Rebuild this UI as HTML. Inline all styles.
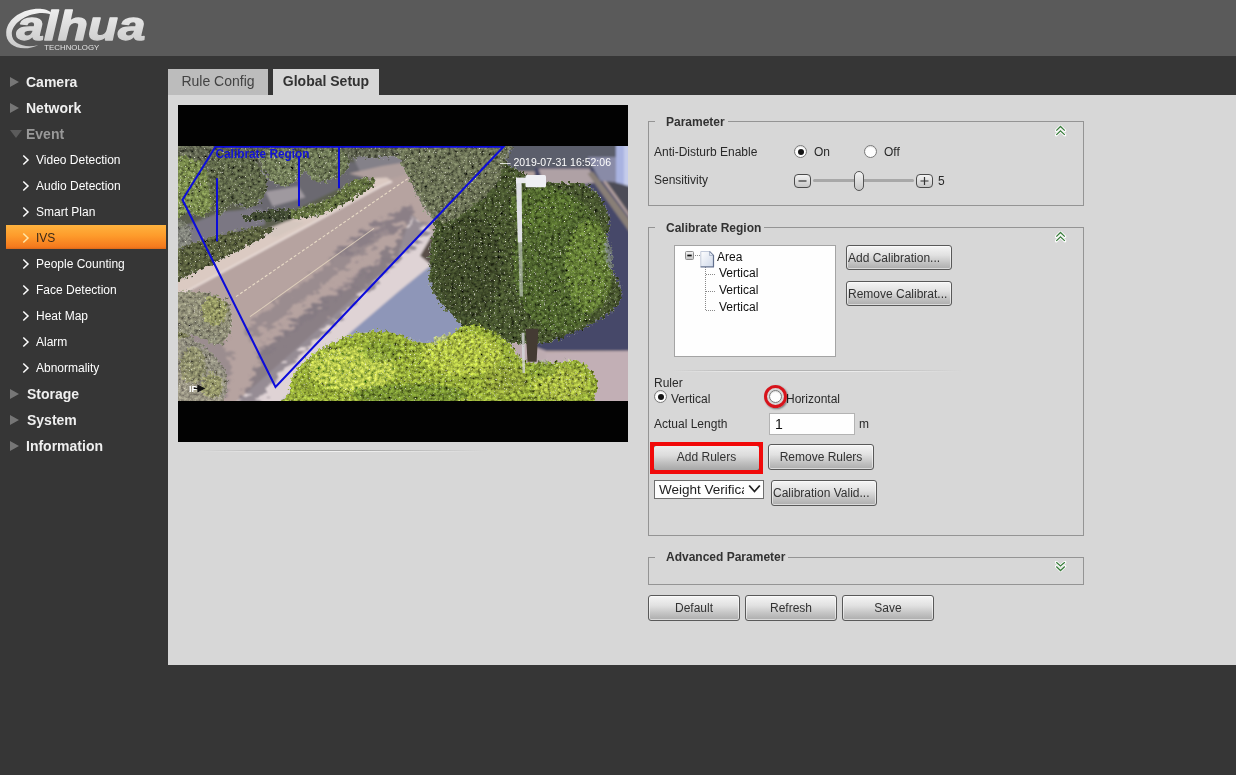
<!DOCTYPE html>
<html lang="en">
<head>
<meta charset="utf-8">
<title>IVS - Global Setup</title>
<style>
*{box-sizing:border-box;margin:0;padding:0}
html,body{width:1236px;height:775px;overflow:hidden}
body{background:#363636;font-family:"Liberation Sans",Arial,sans-serif;font-size:12px;color:#222;position:relative}
.abs{position:absolute}
#root{position:absolute;left:0;top:0;width:1236px;height:775px;will-change:transform;opacity:.999}
#header{left:0;top:0;width:1236px;height:56px;background:#5b5b5b}
#logo{left:0;top:0;width:160px;height:56px}
/* sidebar */
.m1{position:absolute;left:26px;height:26px;line-height:26px;font-size:14px;font-weight:bold;color:#f0f0f0;white-space:nowrap}
.m1.dim{color:#9a9a9a}
.m2{position:absolute;left:36px;height:26px;line-height:26px;font-size:12px;color:#fff;white-space:nowrap}
.tri{position:absolute;left:10px;width:0;height:0;border-left:9px solid #777;border-top:5px solid transparent;border-bottom:5px solid transparent}
.trid{position:absolute;left:10px;width:0;height:0;border-top:8px solid #5c5c5c;border-left:6px solid transparent;border-right:6px solid transparent}
.chev{position:absolute;left:22px;width:8px;height:12px}
#sel{left:6px;top:225px;width:160px;height:24px;background:linear-gradient(#ffb440,#ff9c2c 45%,#f57a1e 92%,#d9691a)}
/* tabs */
.tab{position:absolute;top:69px;height:26px;line-height:24px;font-size:14px;text-align:center;color:#444;white-space:nowrap}
#tab1{left:168px;width:100px;background:#bdbdbd}
#tab2{left:273px;width:106px;background:#d8d8d8;font-weight:bold;font-size:14px;color:#333}
#panel{left:168px;top:95px;width:1068px;height:570px;background:#d8d8d8}
#video{left:178px;top:105px;width:450px;height:337px;background:#030303}
#scene{left:0;top:41px;width:450px;height:255px}
/* fieldsets */
.fs{position:absolute;border:1px solid #959595}
.lg{position:absolute;background:#d8d8d8;font-weight:bold;font-size:12px;color:#333;padding:0 3px 0 11px;height:14px;line-height:14px;white-space:nowrap}
.t{position:absolute;font-size:12px;color:#2a2a2a;white-space:nowrap;line-height:14px;height:14px}
.btn{position:absolute;height:25px;border:1px solid #5a5a5a;border-radius:3px;background:linear-gradient(#f6f6f6,#e2e2e2 40%,#c2c2c2 75%,#aeaeae);font-size:12px;color:#333;line-height:23px;text-align:center;white-space:nowrap;overflow:hidden;box-shadow:inset 0 0 0 1px rgba(255,255,255,.55)}
.radio{position:absolute;width:13px;height:13px;border-radius:50%;border:1px solid #7a7a7a;background:#fff;box-shadow:inset 0 1px 1px rgba(0,0,0,.12)}
.radio.on:after{content:"";position:absolute;left:2.500px;top:2.500px;width:6px;height:6px;border-radius:50%;background:#151515}
.chv{position:absolute;width:12px;height:12px}
</style>
</head>
<body>
<div id="root">
<div id="header" class="abs"></div>
<svg id="logo" class="abs" viewBox="0 0 160 56">
  <defs><linearGradient id="lgr" x1="0" y1="0" x2="0" y2="1"><stop offset="0" stop-color="#f4f4f4"/><stop offset="1" stop-color="#c9c9c9"/></linearGradient></defs>
  <path d="M38.500 45 C22 53 5 46 6.200 32 C7.500 17 26 7.500 42 9 C48 9.600 52 12 53 16 C50 13.500 44 12.500 37 13.500 C23 15.500 11.800 25 11.800 34 C12 44 25 48.500 38.500 45 Z" fill="url(#lgr)"/>
  <text x="16.500" y="39.800" font-family="Liberation Sans, Arial, sans-serif" font-weight="bold" font-style="italic" font-size="40" fill="url(#lgr)" stroke="url(#lgr)" stroke-width="1.300" stroke-linejoin="round" textLength="129" lengthAdjust="spacingAndGlyphs">alhua</text>
  <text x="44.300" y="49.800" font-family="Liberation Sans, Arial, sans-serif" font-size="8" fill="#e2e2e2" textLength="55" lengthAdjust="spacingAndGlyphs">TECHNOLOGY</text>
</svg>

<!-- sidebar -->
<div id="sel" class="abs"></div>
<div class="tri" style="top:77px"></div><div class="m1" style="top:69px">Camera</div>
<div class="tri" style="top:103px"></div><div class="m1" style="top:95px">Network</div>
<div class="trid" style="top:130px"></div><div class="m1 dim" style="top:121px">Event</div>
<div class="m2" style="top:147px">Video Detection</div>
<div class="m2" style="top:173px">Audio Detection</div>
<div class="m2" style="top:199px">Smart Plan</div>
<div class="m2" style="top:225px;color:#3a2a1a">IVS</div>
<div class="m2" style="top:251px">People Counting</div>
<div class="m2" style="top:277px">Face Detection</div>
<div class="m2" style="top:303px">Heat Map</div>
<div class="m2" style="top:329px">Alarm</div>
<div class="m2" style="top:355px">Abnormality</div>
<div class="tri" style="top:389px"></div><div class="m1" style="top:381px;left:27px">Storage</div>
<div class="tri" style="top:415px"></div><div class="m1" style="top:407px;left:27px">System</div>
<div class="tri" style="top:441px"></div><div class="m1" style="top:433px">Information</div>
<svg class="abs" style="left:0;top:140px;width:40px;height:240px" viewBox="0 140 40 240" fill="none" stroke="#fff" stroke-width="1.500">
  <path d="M23.300 155.5 l4.700 4.500 l-4.700 4.500"/><path d="M23.300 181.5 l4.700 4.500 l-4.700 4.500"/><path d="M23.300 207.5 l4.700 4.500 l-4.700 4.500"/>
  <path d="M23.300 233.5 l4.700 4.500 l-4.700 4.500" stroke="#ffe7a8"/><path d="M23.300 259.5 l4.700 4.500 l-4.700 4.500"/><path d="M23.300 285.5 l4.700 4.500 l-4.700 4.500"/>
  <path d="M23.300 311.5 l4.700 4.500 l-4.700 4.500"/><path d="M23.300 337.5 l4.700 4.500 l-4.700 4.500"/><path d="M23.300 363.5 l4.700 4.500 l-4.700 4.500"/>
</svg>

<!-- tabs + panel -->
<div id="tab1" class="tab">Rule Config</div>
<div id="tab2" class="tab">Global Setup</div>
<div id="panel" class="abs"></div>

<!-- video -->
<div id="video" class="abs">
<svg id="scene" class="abs" viewBox="0 0 450 254" preserveAspectRatio="none">
  <rect width="450" height="254" fill="#8a8380"/>
  <!--SCENE-START-->
  <defs>
    <filter id="gb" x="-5%" y="-5%" width="110%" height="110%"><feGaussianBlur stdDeviation="1.200"/></filter>
    <filter id="sh" x="-10%" y="-10%" width="120%" height="120%">
      <feTurbulence type="fractalNoise" baseFrequency="0.090 0.200" numOctaves="3" seed="11" result="n"/>
      <feDisplacementMap in="SourceGraphic" in2="n" scale="22" xChannelSelector="R" yChannelSelector="G" result="d"/>
      <feGaussianBlur in="d" stdDeviation="0.900"/>
    </filter>
    <filter id="leaf" x="-10%" y="-10%" width="120%" height="120%">
      <feTurbulence type="fractalNoise" baseFrequency="0.300" numOctaves="3" seed="5" result="n"/>
      <feColorMatrix in="n" type="matrix" values="1.400 0 0 0 -0.180  1.400 0 0 0 -0.180  1.400 0 0 0 -0.180  0 0 0 0 1" result="g"/>
      <feDisplacementMap in="SourceGraphic" in2="n" scale="9" xChannelSelector="R" yChannelSelector="G" result="d0"/>
      <feGaussianBlur in="d0" stdDeviation="0.700" result="d"/>
      <feBlend in="g" in2="d" mode="overlay" result="bl"/>
      <feComposite in="bl" in2="d" operator="in" result="blm"/>
      <feTurbulence type="fractalNoise" baseFrequency="0.800" numOctaves="1" seed="9" result="n2"/>
      <feColorMatrix in="n2" type="matrix" values="0 0 0 0 0.960  0 0 0 0 0.960  0 0 0 0 0.820  5 0 0 0 -3.300" result="sp"/>
      <feComposite in="sp" in2="d" operator="in" result="spm"/>
      <feMerge><feMergeNode in="blm"/><feMergeNode in="spm"/></feMerge>
    </filter>
    <clipPath id="cs"><rect width="450" height="254"/></clipPath>
  </defs>
  <g clip-path="url(#cs)">
  <g filter="url(#gb)">
    <rect x="-5" y="-5" width="460" height="264" fill="#b7a4a1"/>
    <path d="M-3.6 -3.6 L240.3 -3.6 L233.0 22.6 L209.3 32.8 L196.6 33.5 L94.7 85.6 L-3.6 138.3 Z" fill="#5d6150"/>
    <path d="M72.8 25.5 L152.9 14.6 L203.9 18.2 L189.3 29.1 L120.1 61.9 L83.7 72.8 L58.3 58.3 Z" fill="#6c6a72"/>
    <path d="M-3.6 83.7 L43.7 65.5 L83.7 61.9 L87.4 78.3 L43.7 89.2 L-3.6 109.2 Z" fill="#7c7884"/>
    <path d="M87.4 45.5 L120.1 40.0 L127.4 51.0 L94.7 60.1 Z" fill="#a09aa0"/>
    <path d="M174.8 10.9 L233.0 5.5 L236.7 16.4 L203.9 21.1 L182.0 25.5 Z" fill="#85828a"/>
    <path d="M171.1 27.3 L203.9 20.0 L236.7 14.6 L240.3 25.5 L209.3 33.5 L189.3 32.0 Z" fill="#b0a09e"/>
    <path d="M-3.6 135.4 L92.8 83.0 L145.6 58.3 L196.6 32.0 L209.0 31.3 L214.1 35.3 L203.9 40.0 L105.6 93.2 L-3.6 152.2 Z" fill="#dccbc3"/>
    <path d="M-3.6 151.5 L105.6 92.5 L203.9 39.7 L214.1 35.3" fill="none" stroke="#efe3df" stroke-width="1.600"/>
    <path d="M78.3 87.4 L109.2 74.6 L127.4 76.5 L98.3 91.0 Z" fill="#d6c8c0"/>
    <path d="M54.6 258.5 L103.8 258.5 L182.0 180.2 L225.7 143.8 L254.9 120.1 L254.9 85.6 L233.0 69.2 L218.4 112.9 L152.9 171.1 Z" fill="#e0d4d6"/>
    <path d="M100.1 258.5 L174.8 183.9 L222.1 143.8 L254.9 117.2 L256.7 145.6 L291.3 182.0 L254.9 203.9 L120.1 254.9 Z" fill="#8f97b9"/>
    <path d="M242.1 109.2 L254.9 87.4 L262.1 120.1 L254.9 120.1 Z" fill="#5a5048"/>
    <path d="M324.0 -3.6 L442.4 -3.6 L442.4 25.5 L324.0 25.5 Z" fill="#5c5f6c"/>
    <path d="M356.8 21.8 L415.0 21.8 L455.1 76.5 L455.1 203.9 L356.8 203.9 Z" fill="#474a6a"/>
    <path d="M360.4 22.6 L411.4 22.6 L418.7 36.4 L367.7 43.7 Z" fill="#b0a2a6"/>
    <path d="M409.6 27.3 L415.0 25.5 L455.1 78.3 L455.1 91.0 Z" fill="#8a8078"/>
    <path d="M418.7 21.8 L455.1 21.8 L455.1 72.8 Z" fill="#4e4e58"/>
    <path d="M409.6 10.9 L440.5 10.9 L440.5 36.4 L422.3 34.6 Z" fill="#8a8ca8"/>
    <path d="M438.0 -3.6 L455.1 -3.6 L455.1 40.8 L438.0 36.4 Z" fill="#aab4e2"/>
    <path d="M446.0 -3.6 L455.1 -3.6 L455.1 40.8 L446.0 38.6 Z" fill="#c6cdec"/>
    <path d="M364.1 205.7 L455.1 203.9 L455.1 258.5 L364.1 258.5 Z" fill="#c3b0b6"/>
    <path d="M327.7 189.3 L367.7 203.9 L367.7 258.5 L327.7 258.5 Z" fill="#bfadb2"/>
  </g>
  <g filter="url(#sh)">
    <path d="M61.9 258.5 L83.7 203.9 L131.1 163.8 L196.6 120.1 L236.7 72.8 L251.2 85.6 L218.4 116.5 L109.2 218.4 L78.3 258.5 Z" fill="#7a717c" opacity="0.72"/>
    <path d="M65.5 182.0 L127.4 134.7 L189.3 83.7 L233.0 60.1 L238.5 67.4 L196.6 98.3 L134.7 145.6 L72.8 193.0 Z" fill="#7f7680" opacity="0.5"/>
    <path d="M78.3 203.9 L138.3 156.6 L203.9 109.2 L207.5 114.7 L142.0 163.8 L81.9 211.2 Z" fill="#7f7680" opacity="0.4"/>
    <path d="M156.6 105.6 L203.9 72.8 L233.0 58.3 L236.7 72.8 L196.6 91.0 L160.2 112.9 Z" fill="#7a717c" opacity="0.45"/>
    <path d="M0.0 182.0 L21.8 171.1 L54.6 203.9 L47.3 254.9 L0.0 218.4 Z" fill="#8a8086" opacity="0.6"/>
  </g>
  <path d="M58 150 L232 31" stroke="#f0e2cc" stroke-width="1.100" stroke-dasharray="3 2" opacity=".9" fill="none"/>
  <path d="M72 170 L196 82" stroke="#eedfc6" stroke-width="1" opacity=".7" fill="none"/>
  <g filter="url(#leaf)">
    <path d="M-3.6 -3.6 L233.0 -3.6 L225.7 10.9 L189.3 11.7 L152.9 10.9 L109.2 18.2 L72.8 14.6 L36.4 18.2 L-3.6 21.8 Z" fill="#5e6450"/>
    <path d="M-3.6 14.6 C0.0 5.5 11.8 11.5 18.2 14.6 C24.6 17.6 31.7 26.1 34.6 32.8 C37.5 39.4 37.2 48.2 35.7 54.6 C34.2 61.0 29.6 69.2 25.5 71.0 C21.4 72.8 15.8 65.8 10.9 65.5 C6.1 65.2 -1.2 77.7 -3.6 69.2 C-6.1 60.7 -7.3 23.7 -3.6 14.6 Z" fill="#77884c"/>
    <path d="M-3.6 78.3 C-0.9 71.9 10.3 74.9 12.7 81.9 C15.2 88.9 13.7 113.8 10.9 120.1 C8.2 126.5 -1.2 127.1 -3.6 120.1 C-6.1 113.2 -6.4 84.6 -3.6 78.3 Z" fill="#5f6a44" opacity="0.7"/>
    <path d="M32.8 14.6 C37.9 9.1 53.1 5.5 61.9 7.3 C70.7 9.1 81.3 18.8 85.6 25.5 C89.8 32.2 89.5 41.3 87.4 47.3 C85.3 53.4 78.3 60.1 72.8 61.9 C67.4 63.7 60.1 57.0 54.6 58.3 C49.2 59.5 44.0 72.2 40.0 69.2 C36.1 66.1 32.2 49.2 30.9 40.0 C29.7 30.9 27.6 20.0 32.8 14.6 Z" fill="#5f6848"/>
    <path d="M83.7 7.3 C88.0 2.4 109.2 1.2 116.5 3.6 C123.8 6.1 128.6 15.8 127.4 21.8 C126.2 27.9 115.3 38.2 109.2 40.0 C103.2 41.9 95.3 38.2 91.0 32.8 C86.8 27.3 79.5 12.1 83.7 7.3 Z" fill="#6f7a56"/>
    <path d="M123.8 3.6 C129.2 -0.3 152.3 -1.2 160.2 1.8 C168.1 4.9 173.5 16.1 171.1 21.8 C168.7 27.6 152.9 35.8 145.6 36.4 C138.3 37.0 131.1 30.9 127.4 25.5 C123.8 20.0 118.3 7.6 123.8 3.6 Z" fill="#6a7552"/>
    <path d="M-3.6 106.3 C4.2 98.5 28.5 91.6 43.7 87.4 C58.9 83.1 79.2 81.1 87.4 80.8 C95.6 80.6 100.1 80.6 92.8 85.9 C85.6 91.3 59.8 104.9 43.7 112.9 C27.6 120.9 4.2 135.1 -3.6 134.0 C-11.5 132.9 -11.5 114.1 -3.6 106.3 Z" fill="#585f3c"/>
    <path d="M105.6 65.5 C111.7 62.5 134.1 59.8 145.6 54.6 C157.2 49.5 166.3 38.1 174.8 34.6 C183.3 31.1 194.2 32.0 196.6 33.5 C199.0 35.0 197.8 38.0 189.3 43.7 C180.8 49.3 159.0 62.5 145.6 67.4 C132.3 72.2 115.9 73.1 109.2 72.8 C102.5 72.5 99.5 68.6 105.6 65.5 Z" fill="#62703f"/>
    <path d="M65.5 69.2 C71.0 67.1 98.3 61.3 105.6 61.9 C112.9 62.5 114.7 70.7 109.2 72.8 C103.8 74.9 80.1 75.2 72.8 74.6 C65.5 74.0 60.1 71.3 65.5 69.2 Z" fill="#3f4a30"/>
    <path d="M-3.6 149.3 C0.6 141.9 13.0 144.0 21.8 144.9 C30.6 145.8 43.8 148.5 49.2 154.7 C54.5 160.9 55.4 174.8 53.9 182.0 C52.4 189.3 46.0 197.2 40.0 198.4 C34.1 199.6 25.5 190.8 18.2 189.3 C10.9 187.8 0.0 196.0 -3.6 189.3 C-7.3 182.6 -7.9 156.7 -3.6 149.3 Z" fill="#6e7340" opacity="0.78"/>
    <path d="M-3.6 189.3 C0.6 178.4 14.0 191.7 21.8 196.6 C29.7 201.5 39.1 211.2 43.7 218.4 C48.2 225.7 50.4 233.0 49.2 240.3 C47.9 247.6 45.2 258.5 36.4 262.1 C27.6 265.8 3.0 274.3 -3.6 262.1 C-10.3 250.0 -7.9 200.2 -3.6 189.3 Z" fill="#70743f" opacity="0.7"/>
    <ellipse cx="36.4" cy="163.8" rx="13.1" ry="14.6" fill="#9aa050" opacity="0.6"/>
    <ellipse cx="14.6" cy="218.4" rx="13.1" ry="18.2" fill="#878c48" opacity="0.5"/>
    <ellipse cx="34.6" cy="238.5" rx="10.9" ry="12.4" fill="#979c4c" opacity="0.55"/>
    <path d="M225.7 -3.6 C241.2 -10.3 308.9 -6.7 325.8 -3.6 C342.8 -0.6 321.3 8.2 327.7 14.6 C334.0 20.9 350.1 30.3 364.1 34.6 C378.0 38.8 400.2 33.7 411.4 40.0 C422.6 46.4 429.0 61.3 431.4 72.8 C433.9 84.3 424.2 98.3 426.0 109.2 C427.8 120.1 440.5 129.6 442.4 138.3 C444.2 147.1 443.9 154.4 436.9 162.0 C429.9 169.6 415.0 177.8 400.5 183.9 C385.9 189.9 367.7 198.7 349.5 198.4 C331.3 198.1 303.4 186.6 291.3 182.0 C279.1 177.5 282.8 177.2 276.7 171.1 C270.6 165.0 259.1 155.9 254.9 145.6 C250.6 135.3 251.2 121.4 251.2 109.2 C251.2 97.1 257.9 85.0 254.9 72.8 C251.8 60.7 237.9 49.2 233.0 36.4 C228.2 23.7 210.3 3.0 225.7 -3.6 Z" fill="#46542f"/>
    <ellipse cx="382.3" cy="116.5" rx="47.3" ry="69.2" fill="#52692f" opacity="0.8"/>
    <ellipse cx="411.4" cy="120.1" rx="23.7" ry="45.5" fill="#6f8e3a" opacity="0.6"/>
    <ellipse cx="364.1" cy="61.9" rx="32.8" ry="21.8" fill="#55702f" opacity="0.7"/>
    <ellipse cx="291.3" cy="120.1" rx="32.8" ry="51.0" fill="#3a462c" opacity="0.6"/>
    <path d="M225.7 -3.6 C241.2 -10.3 308.9 -6.7 325.8 -3.6 C342.8 -0.6 329.8 6.7 327.7 14.6 C325.5 22.5 321.6 34.0 313.1 43.7 C304.6 53.4 286.4 68.0 276.7 72.8 C267.0 77.7 262.1 78.9 254.9 72.8 C247.6 66.7 237.9 49.2 233.0 36.4 C228.2 23.7 210.3 3.0 225.7 -3.6 Z" fill="#6f7458" opacity="0.92"/>
    <path d="M109.2 262.1 C85.0 259.1 107.1 254.9 109.2 247.6 C111.3 240.3 113.5 227.5 122.0 218.4 C130.5 209.3 146.5 198.7 160.2 193.0 C173.8 187.2 188.1 183.3 203.9 183.9 C219.7 184.5 240.3 197.6 254.9 196.6 C269.4 195.6 279.1 178.3 291.3 177.7 C303.4 177.1 318.0 186.8 327.7 193.0 C337.4 199.2 337.4 211.3 349.5 214.8 C361.7 218.3 389.0 211.0 400.5 214.1 C412.0 217.1 416.0 226.8 418.7 233.0 C421.4 239.2 417.5 246.4 416.9 251.2 C416.3 256.1 442.1 259.7 415.0 262.1 C388.0 264.6 305.8 265.8 254.9 265.8 C203.9 265.8 133.5 265.2 109.2 262.1 Z" fill="#93a838"/>
    <ellipse cx="174.8" cy="222.1" rx="43.7" ry="21.8" fill="#bccc50" opacity="0.8"/>
    <ellipse cx="284.0" cy="207.5" rx="40.0" ry="21.8" fill="#b0c046" opacity="0.8"/>
    <ellipse cx="382.3" cy="236.7" rx="29.1" ry="16.4" fill="#a6b444" opacity="0.8"/>
    <ellipse cx="233.0" cy="247.6" rx="58.3" ry="10.9" fill="#6f8a30" opacity="0.8"/>
    <ellipse cx="203.9" cy="203.9" rx="18.2" ry="10.9" fill="#7a9434" opacity="0.6"/>
    <ellipse cx="364.1" cy="222.1" rx="14.6" ry="9.1" fill="#7a9434" opacity="0.6"/>
    <ellipse cx="327.7" cy="233.0" rx="21.8" ry="14.6" fill="#8a9a38" opacity="0.7"/>
  </g>
  <path d="M347.7 182.0 L360.4 182.0 L358.6 214.8 L349.5 214.8 Z" fill="#453c34"/>
  <!-- lamp -->
  <path d="M338 33 L343.600 33 L344.200 96 L339.800 96 Z" fill="#e9e9f0" opacity=".95"/>
  <path d="M340.200 96 L344.200 96 L345 150 L341.600 150 Z" fill="#cfd3d2" opacity=".6"/>
  <path d="M343.500 186 L346.500 186 L347 226 L344.500 226 Z" fill="#d8d8dc" opacity=".8"/>
  <path d="M338 31.500 h11 v5.500 h-11 z" fill="#ebebf0"/>
  <rect x="347.500" y="29" width="20.500" height="12" rx="1.500" fill="#f0f0f5"/>
  <!-- overlays -->
  <path d="M37.500 0.800 L4.500 53.500 L97.500 240 L325.500 0.800 Z" fill="none" stroke="#0d0ddc" stroke-width="2" stroke-linejoin="miter"/>
  <path d="M39 32 V95 M121 10 V60 M161 0 V42" stroke="#0d0ddc" stroke-width="2" fill="none"/>
  <text x="37.500" y="11.500" font-family="Liberation Sans, Arial, sans-serif" font-weight="bold" font-size="12" fill="#1212d8" textLength="94" lengthAdjust="spacingAndGlyphs">Calibrate Region</text>
  <text x="322" y="20" font-family="Liberation Sans, Arial, sans-serif" font-size="11" fill="#fff" textLength="111" lengthAdjust="spacingAndGlyphs">— 2019-07-31 16:52:06</text>
  <g><text x="11" y="245" font-family="Liberation Sans, Arial, sans-serif" font-weight="bold" font-size="9" fill="#fff">IP</text><path d="M20 238.500 l6 3 l-6 3 z M16 241.500 h5" fill="#111" stroke="#111" stroke-width="1.200"/></g>
  </g>
<!--SCENE-END-->
</svg>
</div>

<div class="abs" style="left:200px;top:450px;width:286px;height:1px;background:linear-gradient(90deg,rgba(170,170,170,0),#aaaaaa 35%,#aaaaaa 55%,rgba(170,170,170,0))"></div>
<div class="abs" style="left:200px;top:451px;width:286px;height:1px;background:linear-gradient(90deg,rgba(240,240,240,0),#f2f2f2 35%,#f2f2f2 55%,rgba(240,240,240,0))"></div>
<!--RIGHT-START-->
<!-- Parameter fieldset -->
<div class="fs" style="left:648px;top:121px;width:436px;height:85px"></div>
<div class="lg" style="left:655px;top:115px">Parameter</div>
<div class="t" style="left:654px;top:145px">Anti-Disturb Enable</div>
<div class="radio on" style="left:794px;top:145px"></div><div class="t" style="left:814px;top:145px">On</div>
<div class="radio" style="left:864px;top:145px"></div><div class="t" style="left:884px;top:145px">Off</div>
<div class="t" style="left:654px;top:173px">Sensitivity</div>
<svg class="abs" style="left:790px;top:168px;width:160px;height:26px" viewBox="790 168 160 26">
  <defs><linearGradient id="sb" x1="0" y1="0" x2="0" y2="1"><stop offset="0" stop-color="#f6f6f6"/><stop offset="1" stop-color="#c6c6c6"/></linearGradient></defs>
  <rect x="813" y="179" width="101" height="3" rx="1.500" fill="#a9a9a9"/>
  <rect x="794.500" y="174.500" width="16" height="13" rx="3.500" fill="url(#sb)" stroke="#4c4c4c"/>
  <path d="M798.500 181 h8" stroke="#333" stroke-width="1.200"/>
  <rect x="916.500" y="174.500" width="16" height="13" rx="3.500" fill="url(#sb)" stroke="#4c4c4c"/>
  <path d="M920.500 181 h8 M924.500 177 v8" stroke="#333" stroke-width="1.200"/>
  <rect x="854.500" y="171.500" width="9" height="19" rx="4.500" fill="url(#sb)" stroke="#555"/>
</svg>
<div class="t" style="left:938px;top:174px">5</div>
<svg class="chv" style="left:1055px;top:125px" viewBox="0 0 12 12"><path d="M1.300 5.600 L5.500 1.500 L9.800 5.600 M1.300 9.900 L5.500 5.800 L9.800 9.900" fill="none" stroke="#fff" stroke-width="2.900" stroke-linejoin="round" stroke-linecap="round"/><path d="M1.300 5.600 L5.500 1.500 L9.800 5.600 M1.300 9.900 L5.500 5.800 L9.800 9.900" fill="none" stroke="#3a7d3c" stroke-width="1.300"/></svg>

<!-- Calibrate Region fieldset -->
<div class="fs" style="left:648px;top:227px;width:436px;height:309px"></div>
<div class="lg" style="left:655px;top:221px">Calibrate Region</div>
<svg class="chv" style="left:1055px;top:231px" viewBox="0 0 12 12"><path d="M1.300 5.600 L5.500 1.500 L9.800 5.600 M1.300 9.900 L5.500 5.800 L9.800 9.900" fill="none" stroke="#fff" stroke-width="2.900" stroke-linejoin="round" stroke-linecap="round"/><path d="M1.300 5.600 L5.500 1.500 L9.800 5.600 M1.300 9.900 L5.500 5.800 L9.800 9.900" fill="none" stroke="#3a7d3c" stroke-width="1.300"/></svg>
<div class="abs" style="left:674px;top:245px;width:162px;height:112px;background:#fff;border:1px solid #a5a5a5"></div>
<svg class="abs" style="left:680px;top:248px;width:40px;height:66px" viewBox="680 248 40 66">
  <defs><linearGradient id="fi" x1="0" y1="0" x2="1" y2="1"><stop offset="0" stop-color="#ffffff"/><stop offset="1" stop-color="#cfd9ea"/></linearGradient></defs>
  <rect x="685.500" y="251.500" width="8" height="8" rx="1" fill="url(#sb)" stroke="#8f8f8f"/>
  <path d="M687.300 255.500 h4.400" stroke="#111" stroke-width="1.700"/>
  <path d="M695 255.500 h6 M705.500 267 v44 M706 274.500 h10 M706 291.500 h10 M706 310.500 h10" stroke="#8a8a8a" stroke-width="1" stroke-dasharray="1 1" fill="none"/>
  <path d="M701 251.500 h8.500 l4 4 v11 h-12.500 z" fill="url(#fi)"/>
  <path d="M700.800 266.500 v-15 h8.700" fill="none" stroke="#c3cbdb" stroke-width="1"/>
  <path d="M709.500 251.500 l4 4 v11.300 M700.500 266.800 h13.500" fill="none" stroke="#63718f" stroke-width="1.200"/>
  <path d="M709.500 251.800 v3.700 h3.700" fill="#dfe6f3" stroke="#9aa6bd" stroke-width="0.700"/>
</svg>
<div class="t" style="left:717px;top:250px;color:#111">Area</div>
<div class="t" style="left:719px;top:266px;color:#111">Vertical</div>
<div class="t" style="left:719px;top:283px;color:#111">Vertical</div>
<div class="t" style="left:719px;top:300px;color:#111">Vertical</div>
<div class="btn" style="left:846px;top:245px;width:106px;text-align:left;padding-left:1px;line-height:25px">Add Calibration...</div>
<div class="btn" style="left:846px;top:281px;width:106px;text-align:left;padding-left:1px;line-height:25px">Remove Calibrat...</div>
<div class="abs" style="left:672px;top:370px;width:290px;height:1px;background:linear-gradient(90deg,rgba(176,176,176,0),#b4b4b4 25%,#b4b4b4 60%,rgba(176,176,176,0))"></div>
<div class="abs" style="left:672px;top:371px;width:290px;height:1px;background:linear-gradient(90deg,rgba(240,240,240,0),#ededed 25%,#ededed 60%,rgba(240,240,240,0))"></div>
<div class="t" style="left:654px;top:376px">Ruler</div>
<div class="radio on" style="left:654px;top:390px"></div><div class="t" style="left:671px;top:392px">Vertical</div>
<div class="t" style="left:786px;top:392px">Horizontal</div>
<div class="radio" style="left:769px;top:390px"></div>
<div class="abs" style="left:764px;top:385px;width:23px;height:23px;border-radius:50%;border:3px solid #d8141c;box-shadow:1px 1px 2px rgba(0,0,0,.45)"></div>
<div class="t" style="left:654px;top:417px">Actual Length</div>
<div class="abs" style="left:769px;top:413px;width:86px;height:22px;background:#fff;border:1px solid #b4b4b4;font-size:14px;line-height:20px;padding-left:5px;color:#111">1</div>
<div class="t" style="left:859px;top:417px">m</div>
<div class="btn" style="left:653px;top:445px;width:107px;height:26px;line-height:23px;box-shadow:none;background:linear-gradient(#eeeeee,#dcdcdc 40%,#bcbcbc 75%,#a8a8a8)">Add Rulers</div>
<div class="abs" style="left:650px;top:442px;width:113px;height:32px;border:4px solid #f20a0a"></div>
<div class="btn" style="left:768px;top:444px;width:106px;height:26px;line-height:24px">Remove Rulers</div>
<div class="abs" style="left:654px;top:480px;width:110px;height:19px;background:#fff;border:1px solid #6f6f6f;font-size:13.500px;line-height:17px;padding-left:4px;color:#222;overflow:hidden;white-space:nowrap"><span style="display:inline-block;width:85px;overflow:hidden;vertical-align:top">Weight Verification</span></div>
<svg class="abs" style="left:748px;top:484px;width:13px;height:10px" viewBox="0 0 13 10"><path d="M1.200 1.500 L6.500 7.500 L11.800 1.500" fill="none" stroke="#222" stroke-width="1.800"/></svg>
<div class="btn" style="left:771px;top:480px;width:106px;height:26px;line-height:24px;text-align:left;padding-left:1px">Calibration Valid...</div>

<!-- Advanced -->
<div class="fs" style="left:648px;top:557px;width:436px;height:28px"></div>
<div class="lg" style="left:655px;top:550px">Advanced Parameter</div>
<svg class="chv" style="left:1055px;top:561px" viewBox="0 0 12 12"><path d="M1.300 1.300 L5.500 5 L9.800 1.300 M1.300 5.500 L5.500 9.500 L9.800 5.500" fill="none" stroke="#fff" stroke-width="2.900" stroke-linejoin="round" stroke-linecap="round"/><path d="M1.300 1.300 L5.500 5 L9.800 1.300 M1.300 5.500 L5.500 9.500 L9.800 5.500" fill="none" stroke="#3a7d3c" stroke-width="1.300"/></svg>
<div class="btn" style="left:648px;top:595px;width:92px;height:26px;line-height:24px">Default</div>
<div class="btn" style="left:745px;top:595px;width:92px;height:26px;line-height:24px">Refresh</div>
<div class="btn" style="left:842px;top:595px;width:92px;height:26px;line-height:24px">Save</div>
<!--RIGHT-END-->
</div>
</body>
</html>
